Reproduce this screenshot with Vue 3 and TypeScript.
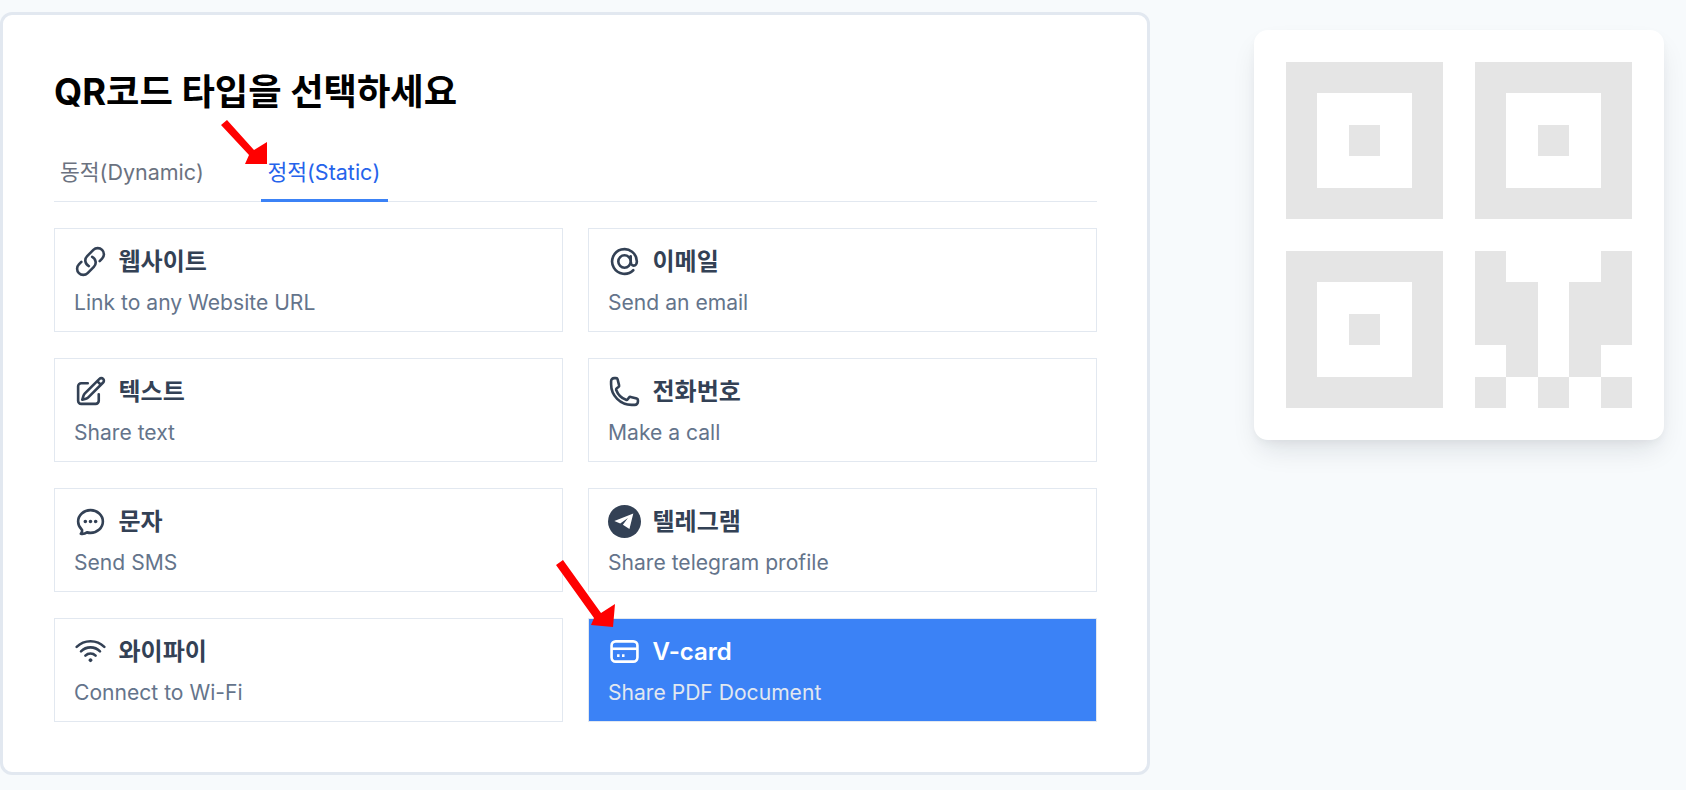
<template>
  <div class="page">
    <section class="panel">
      <h1 class="panel-title">QR코드 타입을 선택하세요</h1>

      <div class="tabs">
        <button class="tab">동적(Dynamic)</button>
        <button class="tab active">정적(Static)</button>
      </div>

      <div class="type-grid">
        <div
          v-for="item in types"
          :key="item.name"
          class="type-card"
          :class="{ selected: item.selected }"
        >
          <div class="type-head">
            <svg class="type-icon" viewBox="0 0 24 24" aria-hidden="true">
              <template v-if="item.name === '텔레그램'">
                <circle cx="12" cy="12" r="12" fill="currentColor" />
                <path d="M18.4 6.2 4.6 11.7l4.3 1.7 5.6-4-3.7 5 4.8 3.1z" fill="#fff" />
              </template>
              <template v-else-if="item.name === 'V-card'">
                <rect x="2.6" y="4.6" width="18.8" height="14.8" rx="3" fill="none" stroke="currentColor" stroke-width="1.9" />
                <path d="M3 10h18" fill="none" stroke="currentColor" stroke-width="1.9" />
                <path d="M6.6 15h1.8M10.2 15H12" fill="none" stroke="currentColor" stroke-width="1.9" />
              </template>
              <path
                v-else
                :d="item.icon"
                fill="none"
                stroke="currentColor"
                stroke-width="1.9"
                stroke-linecap="round"
                stroke-linejoin="round"
              />
            </svg>
            <span class="type-name">{{ item.name }}</span>
          </div>
          <p class="type-desc">{{ item.desc }}</p>
        </div>
      </div>
    </section>

    <aside class="preview">
      <div class="qr-grid">
        <span
          v-for="(on, i) in qrCells"
          :key="i"
          class="qr-cell"
          :class="{ on }"
        ></span>
      </div>
    </aside>

    <!-- screenshot annotations -->
    <svg class="arrows" width="1686" height="790" aria-hidden="true">
      <g fill="#ff0000" stroke="none">
        <polygon points="221,125 227,120 254,150 267,142 267,164 245,164 249,155" />
        <polygon points="556,565 563,560 601,613 615,604 613,627 591,625 594,618" />
      </g>
    </svg>
  </div>
</template>

<script setup lang="ts">
interface QrType {
  name: string
  desc: string
  icon: string
  selected?: boolean
}

const types: QrType[] = [
  {
    name: '웹사이트',
    desc: 'Link to any Website URL',
    icon: 'M13.19 8.688a4.5 4.5 0 0 1 1.242 7.244l-4.5 4.5a4.5 4.5 0 0 1-6.364-6.364l1.757-1.757m13.35-.622 1.757-1.757a4.5 4.5 0 0 0-6.364-6.364l-4.5 4.5a4.5 4.5 0 0 0 1.242 7.244'
  },
  {
    name: '이메일',
    desc: 'Send an email',
    icon: 'M16.5 12a4.5 4.5 0 1 1-9 0 4.5 4.5 0 0 1 9 0Zm0 0c0 1.657 1.007 3 2.25 3S21 13.657 21 12a9 9 0 1 0-2.636 6.364M16.5 12V8.25'
  },
  {
    name: '텍스트',
    desc: 'Share text',
    icon: 'm16.862 4.487 1.687-1.688a1.875 1.875 0 1 1 2.652 2.652L10.582 16.07a4.5 4.5 0 0 1-1.897 1.13L6 18l.8-2.685a4.5 4.5 0 0 1 1.13-1.897l8.932-8.931Zm0 0L19.5 7.125M18 14v4.75A2.25 2.25 0 0 1 15.75 21H5.25A2.25 2.25 0 0 1 3 18.75V8.25A2.25 2.25 0 0 1 5.25 6H10'
  },
  {
    name: '전화번호',
    desc: 'Make a call',
    icon: 'M2.25 6.75c0 8.284 6.716 15 15 15h2.25a2.25 2.25 0 0 0 2.25-2.25v-1.372c0-.516-.351-.966-.852-1.091l-4.423-1.106c-.44-.11-.902.055-1.173.417l-.97 1.293c-.282.376-.769.542-1.21.38a12.035 12.035 0 0 1-7.143-7.143c-.162-.441.004-.928.38-1.21l1.293-.97c.363-.271.527-.734.417-1.173L6.963 3.102a1.125 1.125 0 0 0-1.091-.852H4.5A2.25 2.25 0 0 0 2.25 4.5v2.25Z'
  },
  {
    name: '문자',
    desc: 'Send SMS',
    icon: 'M8.625 12a.375.375 0 1 1-.75 0 .375.375 0 0 1 .75 0Zm0 0H8.25m4.125 0a.375.375 0 1 1-.75 0 .375.375 0 0 1 .75 0Zm0 0H12m4.125 0a.375.375 0 1 1-.75 0 .375.375 0 0 1 .75 0Zm0 0h-.375M21 12c0 4.556-4.03 8.25-9 8.25a9.764 9.764 0 0 1-2.555-.337A5.972 5.972 0 0 1 5.41 20.97a5.969 5.969 0 0 1-.474-.065 4.48 4.48 0 0 0 .978-2.025c.09-.457-.133-.901-.467-1.226C3.93 16.178 3 14.189 3 12c0-4.556 4.03-8.25 9-8.25s9 3.694 9 8.25Z'
  },
  { name: '텔레그램', desc: 'Share telegram profile', icon: '' },
  {
    name: '와이파이',
    desc: 'Connect to Wi-Fi',
    icon: 'M8.288 15.038a5.25 5.25 0 0 1 7.424 0M5.106 11.856c3.807-3.808 9.98-3.808 13.788 0M1.924 8.674c5.565-5.565 14.587-5.565 20.152 0M12.53 18.22l-.53.53-.53-.53a.75.75 0 0 1 1.06 0Z'
  },
  { name: 'V-card', desc: 'Share PDF Document', icon: '', selected: true }
]

const qrPattern = [
  '11111011111',
  '10001010001',
  '10101010101',
  '10001010001',
  '11111011111',
  '00000000000',
  '11111010001',
  '10001011011',
  '10101011011',
  '10001001010',
  '11111010101'
]

const qrCells = qrPattern.join('').split('').map((c) => c === '1')
</script>

<style>
body {
  background: #f7fafc;
}
</style>

<style scoped>
.page {
  position: relative;
  display: flex;
  align-items: flex-start;
  gap: 104px;
  height: 790px;
  padding-top: 12px;
  box-sizing: border-box;
  overflow: hidden;
  font-family: Inter, "Noto Sans CJK KR", sans-serif;
}

.panel {
  box-sizing: border-box;
  width: 1150px;
  height: 763px;
  flex-shrink: 0;
  padding: 52px 50px 0 51px;
  background: #fff;
  border: 3px solid #e2e8f0;
  border-radius: 12px;
}

.panel-title {
  margin: 0;
  font-size: 36.3px;
  line-height: 50px;
  font-weight: 700;
  color: #000;
}

.tabs {
  display: flex;
  gap: 50.5px;
  margin-top: 30px;
  border-bottom: 1px solid #e2e8f0;
}

.tab {
  padding: 10px 7px 12px 6px;
  margin-bottom: -1px;
  background: none;
  border: none;
  border-bottom: 3px solid transparent;
  font: inherit;
  font-size: 21.5px;
  line-height: 30px;
  color: #6b7280;
}

.tab.active {
  padding-right: 8px;
  color: #2563eb;
  border-bottom-color: #3b82f6;
}

.type-grid {
  display: grid;
  grid-template-columns: 1fr 1fr;
  column-gap: 25px;
  row-gap: 26px;
  margin-top: 26px;
}

.type-card {
  box-sizing: border-box;
  height: 104px;
  padding: 15.6px 19px;
  background: #fff;
  border: 1px solid #e2e8f0;
  color: #334155;
}

.type-head {
  display: flex;
  align-items: center;
  gap: 11.5px;
}

.type-icon {
  width: 33px;
  height: 33px;
  flex-shrink: 0;
}

.type-name {
  font-size: 24px;
  line-height: 33px;
  font-weight: 600;
}

.type-desc {
  margin: 11.4px 0 0;
  font-size: 21.1px;
  line-height: 28px;
  color: #64748b;
}

.type-card.selected {
  background: #3b82f6;
  color: #fff;
}

.type-card.selected .type-desc {
  color: #e2e8f0;
}

.preview {
  box-sizing: border-box;
  width: 410px;
  height: 410px;
  flex-shrink: 0;
  margin-top: 18px;
  padding: 31.5px;
  background: #fff;
  border-radius: 14px;
  box-shadow: 0 14px 28px -6px rgba(15, 23, 42, 0.12), 0 4px 10px -2px rgba(15, 23, 42, 0.05);
}

.qr-grid {
  display: grid;
  grid-template-columns: repeat(11, 1fr);
  grid-template-rows: repeat(11, 1fr);
  width: 100%;
  height: 100%;
}

.qr-cell.on {
  background: #e5e5e5;
}

.arrows {
  position: absolute;
  top: 0;
  left: 0;
  pointer-events: none;
}
</style>
